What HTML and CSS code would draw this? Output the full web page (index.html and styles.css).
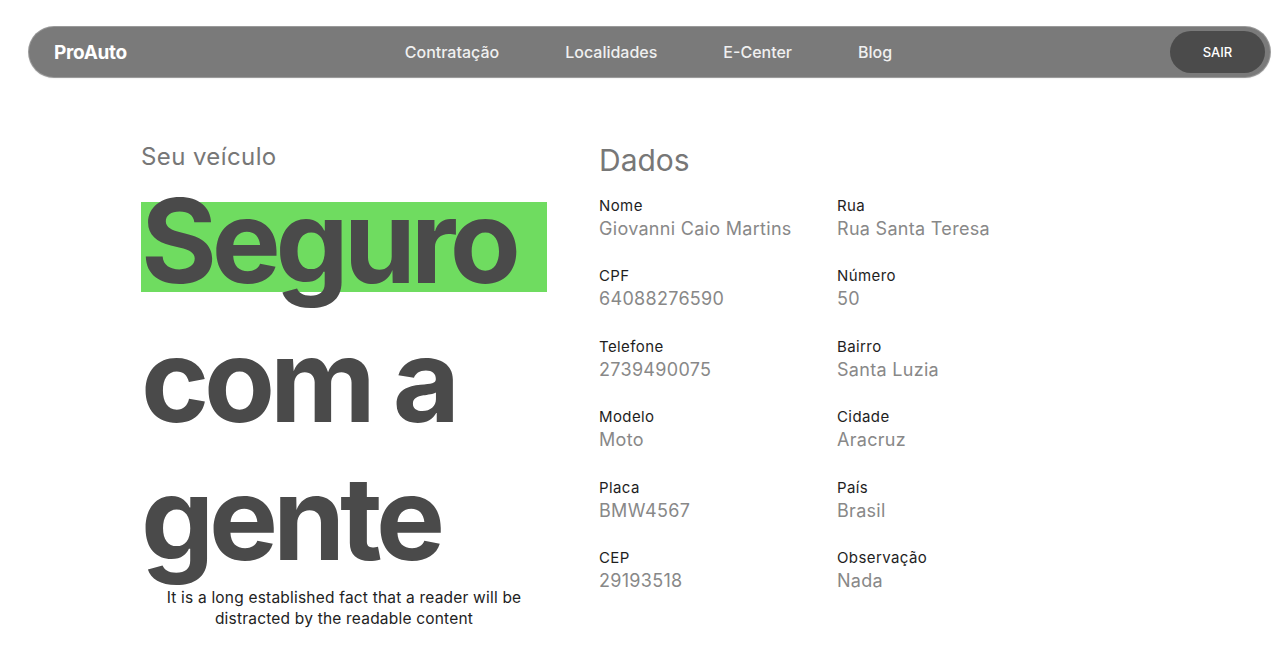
FILE: index.html
```html
<!DOCTYPE html>
<html lang="pt-BR">
<head>
<meta charset="utf-8">
<title>ProAuto</title>
<link rel="stylesheet" href="styles.css">
</head>
<body>
<header class="navbar">
  <div class="brand">ProAuto</div>
  <nav class="links">
    <a href="#">Contratação</a>
    <a href="#">Localidades</a>
    <a href="#">E-Center</a>
    <a href="#">Blog</a>
  </nav>
  <button class="logout">SAIR</button>
</header>
<main class="main">
  <section class="hero">
    <p class="eyebrow">Seu veículo</p>
    <h1 class="headline">
      <span class="line highlight">Seguro</span>
      <span class="line">com a</span>
      <span class="line">gente</span>
    </h1>
    <p class="lead">It is a long established fact that a reader will be distracted by the readable content</p>
  </section>
  <section class="data">
    <h2 class="data-title">Dados</h2>
    <dl class="grid">
      <div class="item"><dt>Nome</dt><dd>Giovanni Caio Martins</dd></div>
      <div class="item"><dt>Rua</dt><dd>Rua Santa Teresa</dd></div>
      <div class="item"><dt>CPF</dt><dd>64088276590</dd></div>
      <div class="item"><dt>Número</dt><dd>50</dd></div>
      <div class="item"><dt>Telefone</dt><dd>2739490075</dd></div>
      <div class="item"><dt>Bairro</dt><dd>Santa Luzia</dd></div>
      <div class="item"><dt>Modelo</dt><dd>Moto</dd></div>
      <div class="item"><dt>Cidade</dt><dd>Aracruz</dd></div>
      <div class="item"><dt>Placa</dt><dd>BMW4567</dd></div>
      <div class="item"><dt>País</dt><dd>Brasil</dd></div>
      <div class="item"><dt>CEP</dt><dd>29193518</dd></div>
      <div class="item"><dt>Observação</dt><dd>Nada</dd></div>
    </dl>
  </section>
</main>
</body>
</html>
```

FILE: styles.css
```css
* { box-sizing: border-box; }
html, body { margin: 0; padding: 0; background: #ffffff; }
body {
  font-family: Inter, "Liberation Sans", sans-serif;
  color: #222;
  overflow: hidden;
}

.navbar {
  margin: 27px 10px 0 29px;
  height: 50px;
  border-radius: 25px;
  background: #7a7a7a;
  box-shadow: 0 0 0 1px #9a9a9a, 0 1px 2px rgba(0, 0, 0, 0.15);
  display: flex;
  align-items: center;
  justify-content: space-between;
  padding: 0 5px 0 25px;
}
.brand {
  color: #ffffff;
  font-size: 19px;
  font-weight: 700;
  letter-spacing: -0.3px;
}
.links {
  display: flex;
  gap: 66px;
}
.links a {
  color: #f0f0f0;
  text-decoration: none;
  font-size: 16px;
  font-weight: 500;
}
.logout {
  width: 95px;
  height: 42px;
  border: none;
  border-radius: 21px;
  background: #4b4b4b;
  color: #ffffff;
  font-family: Inter, "Liberation Sans", sans-serif;
  font-size: 13px;
  font-weight: 500;
}

.main {
  display: flex;
  gap: 52px;
  padding: 66px 0 0 141px;
}
.hero {
  width: 406px;
}
.eyebrow {
  margin: 0;
  font-size: 24px;
  line-height: 28px;
  letter-spacing: 0.4px;
  color: #777;
}
.headline {
  margin: 31px 0 0 0;
  font-size: 116px;
  font-weight: 700;
  letter-spacing: -0.045em;
  color: #4a4a4a;
  line-height: 138px;
}
.line {
  display: block;
  white-space: nowrap;
}
.highlight {
  background: #6fdc60;
  height: 90px;
  line-height: 78px;
  margin-bottom: 19px;
}
.lead {
  margin: 0;
  padding: 0 20px;
  text-align: center;
  font-size: 15.5px;
  line-height: 21px;
  letter-spacing: 0.2px;
  color: #222;
}

.data {
  width: 480px;
}
.data-title {
  margin: 0;
  font-size: 30px;
  font-weight: 400;
  line-height: 34px;
  color: #777;
}
.grid {
  margin: 19px 0 0 0;
  display: grid;
  grid-template-columns: 238px 238px;
  row-gap: 24.4px;
}
.item dt {
  font-size: 15px;
  line-height: 20px;
  letter-spacing: 0.4px;
  color: #1e1e1e;
}
.item dd {
  margin: 0;
  font-size: 18px;
  line-height: 26px;
  letter-spacing: 0.3px;
  color: #888;
}
```
